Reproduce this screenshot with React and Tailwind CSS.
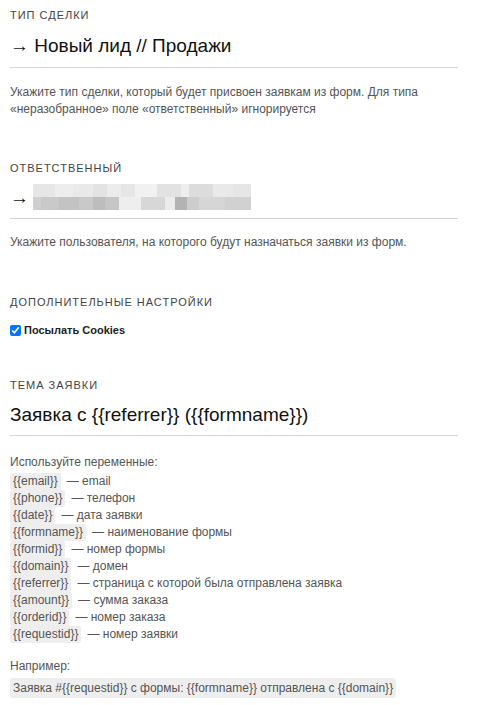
const font = { fontFamily: '"Liberation Sans", Arial, sans-serif' };

const topCells = [
  [22, "#e6e6e6"], [18, "#ededed"], [20, "#e9e9e9"], [14, "#e3e3e3"], [14, "#ececec"],
  [14, "#e6e6e6"], [22, "#f1f1f1"], [24, "#e2e2e2"], [8, "#eeeeee"], [24, "#dcdcdc"],
  [20, "#e9e9e9"], [18, "#e6e6e6"],
];
const bottomCells = [
  [8, "#cfcfcf"], [18, "#c9c9c9"], [20, "#c3c3c3"], [14, "#c9c9c9"], [12, "#bdbdbd"],
  [14, "#c6c6c6"], [22, "#eeeeee"], [24, "#d7d7d7"], [10, "#ececec"], [12, "#b3b3b3"],
  [12, "#cdcdcd"], [26, "#d6d6d6"], [26, "#d1d1d1"],
];

const vars = [
  ["{{email}}", "email"],
  ["{{phone}}", "телефон"],
  ["{{date}}", "дата заявки"],
  ["{{formname}}", "наименование формы"],
  ["{{formid}}", "номер формы"],
  ["{{domain}}", "домен"],
  ["{{referrer}}", "страница с которой была отправлена заявка"],
  ["{{amount}}", "сумма заказа"],
  ["{{orderid}}", "номер заказа"],
  ["{{requestid}}", "номер заявки"],
];

const Label = ({ children, className = "" }) => (
  <div className={`text-[11px] leading-[16px] tracking-[0.09em] text-[#444] uppercase ${className}`}>
    {children}
  </div>
);

const Hint = ({ children, className = "" }) => (
  <p className={`text-[12px] leading-[17px] text-[#555] ${className}`}>{children}</p>
);

export default function App() {
  return (
    <div style={font} className="w-[485px] h-[705px] bg-white pl-[10px] pr-[27px] pt-[7px] overflow-hidden">
      <Label>Тип сделки</Label>
      <div className="mt-[9px] pb-[7px] border-b border-[#d4d4d4] text-[19px] leading-[28px] text-[#111]">
        → Новый лид // Продажи
      </div>
      <Hint className="mt-[16px]">
        Укажите тип сделки, который будет присвоен заявкам из форм. Для типа «неразобранное» поле «ответственный» игнорируется
      </Hint>

      <Label className="mt-[42px]">Ответственный</Label>
      <div className="mt-[8px] pb-[8px] border-b border-[#d4d4d4] flex items-end text-[#111]">
        <span className="text-[19px] leading-[24px] w-[23px]">→</span>
        <div className="flex flex-col">
          <div className="flex h-[13px]">
            {topCells.map(([w, c], i) => (
              <div key={i} className="h-full" style={{ width: w, background: c }} />
            ))}
          </div>
          <div className="flex h-[13px]">
            {bottomCells.map(([w, c], i) => (
              <div key={i} className="h-full" style={{ width: w, background: c }} />
            ))}
          </div>
        </div>
      </div>
      <Hint className="mt-[15px]">Укажите пользователя, на которого будут назначаться заявки из форм.</Hint>

      <Label className="mt-[43px]">Дополнительные настройки</Label>
      <label className="mt-[12px] flex items-center h-[16px] text-[11px] font-bold text-[#222]">
        <input type="checkbox" defaultChecked className="w-[11px] h-[11px] m-0 mr-[3px] accent-[#0075ff]" />
        Посылать Cookies
      </label>

      <Label className="mt-[39px]">Тема заявки</Label>
      <div className="mt-[8px] pb-[6px] border-b border-[#d4d4d4] text-[19px] leading-[28px] text-[#111]">
        Заявка с {"{{referrer}}"} ({"{{formname}}"})
      </div>

      <Hint className="mt-[18px]">Используйте переменные:</Hint>
      <ul className="mt-[2px] text-[12px] leading-[17px] text-[#555]">
        {vars.map(([code, text]) => (
          <li key={code} className="flex items-center h-[17px]">
            <span className="bg-[#eeeeee] rounded-[2px] px-[3px] h-[17px] text-[#555]">{code}</span>
            <span className="ml-[6px]">— {text}</span>
          </li>
        ))}
      </ul>

      <Hint className="mt-[15px]">Например:</Hint>
      <div className="mt-[2px] inline-block bg-[#eeeeee] rounded-[3px] px-[3px] text-[12px] leading-[20px] text-[#555]">
        Заявка #{"{{requestid}}"} с формы: {"{{formname}}"} отправлена с {"{{domain}}"}
      </div>
    </div>
  );
}
